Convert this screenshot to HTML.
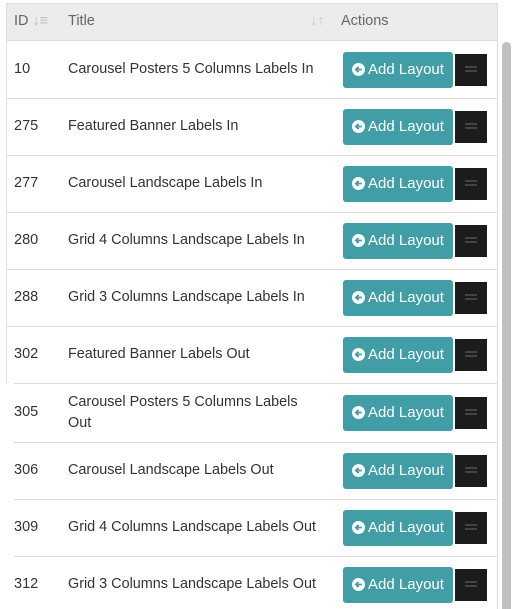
<!DOCTYPE html>
<html><head><style>
body{margin:0;width:514px;height:609px;overflow:hidden;background:#fff;font-family:"Liberation Sans",sans-serif;color:#333;position:relative}
.a{position:absolute}
.hdr{left:6px;top:3px;width:492px;height:38px;background:#ececec;border:1px solid #ddd;box-sizing:border-box}
.h{top:13px;font-size:14.5px;color:#666}
.line{height:1px;background:#ddd}
.id{left:14px;font-size:14.5px}
.t{left:68px;font-size:14.4px;line-height:21px}
.btn{left:343px;width:110px;height:36px;background:#429ea6;border-radius:3px;color:#fff;font-size:15px;display:flex;align-items:center;justify-content:center;gap:3px}
.th{left:455px;width:32px;height:32px;background:#1c1c1c}
.th:after{content:"";position:absolute;left:10px;top:12px;width:12px;height:2px;background:#444;box-shadow:0 4px 0 #444}
</style></head><body>
<div class="a hdr"></div>
<div class="a h" style="left:14px">ID <span style="color:#bbb">&#8595;&#8801;</span></div>
<div class="a h" style="left:68px">Title</div>
<div class="a h" style="left:310px;color:#ccc">&#8595;&#8593;</div>
<div class="a h" style="left:341px">Actions</div>
<div class="a" style="left:6px;top:41px;width:1px;height:342px;background:#ddd"></div>
<div class="a" style="left:497px;top:41px;width:1px;height:568px;background:#ddd"></div>
<div class="a" style="left:502px;top:42px;width:9px;height:567px;background:#c1c1c1;border-radius:5px 5px 0 0"></div>
<div id="rows"></div>
<script>
var rows=[["10","Carousel Posters 5 Columns Labels In"],["275","Featured Banner Labels In"],["277","Carousel Landscape Labels In"],["280","Grid 4 Columns Landscape Labels In"],["288","Grid 3 Columns Landscape Labels In"],["302","Featured Banner Labels Out"],["305","Carousel Posters 5 Columns Labels<br>Out"],["306","Carousel Landscape Labels Out"],["309","Grid 4 Columns Landscape Labels Out"],["312","Grid 3 Columns Landscape Labels Out"]];
var tops=[41,98,155,212,269,326,383,442,499,556],h="";
rows.forEach(function(r,i){var t=tops[i],hh=(i==6?59:57),c=t+hh/2;
h+='<div class="a id" style="top:'+(c-9)+'px">'+r[0]+'</div>';
h+='<div class="a t" style="top:'+(i==6?c-21:c-11)+'px">'+r[1]+'</div>';
h+='<div class="a btn" style="top:'+(c-18)+'px"><svg width="13" height="13" viewBox="0 0 14 14"><circle cx="7" cy="7" r="7" fill="#fff"/><path d="M10.5 7H4.5M7 4.2L4.2 7L7 9.8" stroke="#429ea6" stroke-width="2" fill="none"/></svg>Add Layout</div>';
h+='<div class="a th" style="top:'+(c-16)+'px"></div>';
if(i<9)h+='<div class="a line" style="top:'+(t+hh)+'px;left:'+(i<5?7:14)+'px;width:'+(i<5?490:483)+'px"></div>';});
document.getElementById("rows").innerHTML=h;
</script>
</body></html>
